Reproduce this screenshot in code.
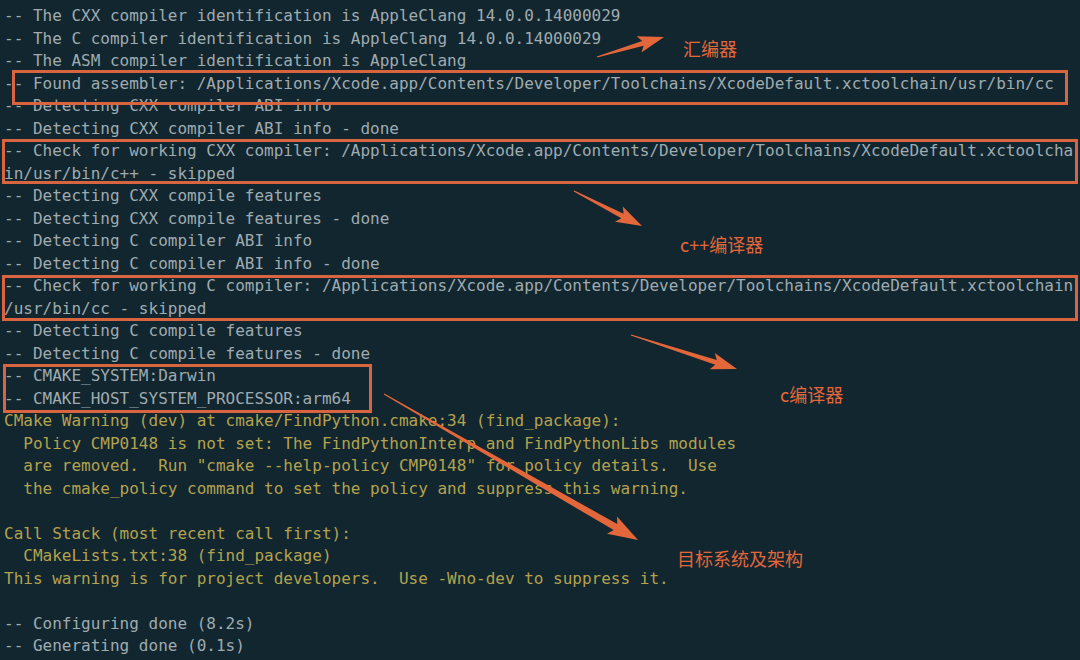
import React from "react";

type Line = { text: string; warn?: boolean };

const lines: Line[] = [
  { text: "-- The CXX compiler identification is AppleClang 14.0.0.14000029" },
  { text: "-- The C compiler identification is AppleClang 14.0.0.14000029" },
  { text: "-- The ASM compiler identification is AppleClang" },
  { text: "-- Found assembler: /Applications/Xcode.app/Contents/Developer/Toolchains/XcodeDefault.xctoolchain/usr/bin/cc" },
  { text: "-- Detecting CXX compiler ABI info" },
  { text: "-- Detecting CXX compiler ABI info - done" },
  { text: "-- Check for working CXX compiler: /Applications/Xcode.app/Contents/Developer/Toolchains/XcodeDefault.xctoolcha" },
  { text: "in/usr/bin/c++ - skipped" },
  { text: "-- Detecting CXX compile features" },
  { text: "-- Detecting CXX compile features - done" },
  { text: "-- Detecting C compiler ABI info" },
  { text: "-- Detecting C compiler ABI info - done" },
  { text: "-- Check for working C compiler: /Applications/Xcode.app/Contents/Developer/Toolchains/XcodeDefault.xctoolchain" },
  { text: "/usr/bin/cc - skipped" },
  { text: "-- Detecting C compile features" },
  { text: "-- Detecting C compile features - done" },
  { text: "-- CMAKE_SYSTEM:Darwin" },
  { text: "-- CMAKE_HOST_SYSTEM_PROCESSOR:arm64" },
  { text: "CMake Warning (dev) at cmake/FindPython.cmake:34 (find_package):", warn: true },
  { text: "  Policy CMP0148 is not set: The FindPythonInterp and FindPythonLibs modules", warn: true },
  { text: '  are removed.  Run "cmake --help-policy CMP0148" for policy details.  Use', warn: true },
  { text: "  the cmake_policy command to set the policy and suppress this warning.", warn: true },
  { text: "" },
  { text: "Call Stack (most recent call first):", warn: true },
  { text: "  CMakeLists.txt:38 (find_package)", warn: true },
  { text: "This warning is for project developers.  Use -Wno-dev to suppress it.", warn: true },
  { text: "" },
  { text: "-- Configuring done (8.2s)" },
  { text: "-- Generating done (0.1s)" },
];

// tapered annotation arrow, thin at the tail, fat head at the tip
function arrowPoints(x1: number, y1: number, x2: number, y2: number, shaft = 5, head = 17, headLen = 22) {
  const dx = x2 - x1;
  const dy = y2 - y1;
  const len = Math.hypot(dx, dy);
  const ux = dx / len;
  const uy = dy / len;
  const nx = -uy;
  const ny = ux;
  const bx = x2 - ux * headLen;
  const by = y2 - uy * headLen;
  const barbX = bx - ux * 4;
  const barbY = by - uy * 4;
  const pts = [
    [x1 + nx * 0.6, y1 + ny * 0.6],
    [bx + nx * (shaft / 2), by + ny * (shaft / 2)],
    [barbX + nx * (head / 2), barbY + ny * (head / 2)],
    [x2, y2],
    [barbX - nx * (head / 2), barbY - ny * (head / 2)],
    [bx - nx * (shaft / 2), by - ny * (shaft / 2)],
    [x1 - nx * 0.6, y1 - ny * 0.6],
  ];
  return pts.map((p) => `${p[0].toFixed(1)},${p[1].toFixed(1)}`).join(" ");
}

const Annotations: React.FC = () => (
  <svg className="absolute inset-0 pointer-events-none" width={1080} height={660} viewBox="0 0 1080 660">
    <g fill="none" stroke="#d8653f" strokeWidth={3}>
      <rect x={13.5} y={71.5} width={1053} height={32} />
      <rect x={3.5} y={140.5} width={1073} height={42} />
      <rect x={3.5} y={276.5} width={1073} height={43} />
      <rect x={4.5} y={365.5} width={366} height={46} />
    </g>
    <g fill="#e4673b">
      <polygon points={arrowPoints(597, 57, 664, 37)} />
      <polygon points={arrowPoints(574, 191, 642, 226)} />
      <polygon points={arrowPoints(631, 335, 737, 369)} />
      <polygon points={arrowPoints(384, 394, 638, 540, 7, 20, 26)} />
    </g>
  </svg>
);

export default function App() {
  return (
    <div className="relative w-[1080px] h-[660px] overflow-hidden bg-[#12262f]">
      <div className="pt-[5px] pl-[4px] font-['DejaVu_Sans_Mono',monospace] text-[16px] leading-[22.5px]">
        {lines.map((l, i) => (
          <div key={i} className={`whitespace-pre h-[22.5px] ${l.warn ? "text-[#b3a24f]" : "text-[#9fabaf]"}`}>
            {l.text}
          </div>
        ))}
      </div>
      <Annotations />
      <div className="absolute left-[683px] top-[35px] text-[18px] text-[#e4673b] font-['Noto_Sans_CJK_SC',sans-serif]">汇编器</div>
      <div className="absolute left-[680px] top-[231px] text-[18px] text-[#e4673b] font-['Noto_Sans_CJK_SC',sans-serif]">c++编译器</div>
      <div className="absolute left-[780px] top-[381px] text-[18px] text-[#e4673b] font-['Noto_Sans_CJK_SC',sans-serif]">c编译器</div>
      <div className="absolute left-[677px] top-[545px] text-[18px] text-[#e4673b] font-['Noto_Sans_CJK_SC',sans-serif]">目标系统及架构</div>
    </div>
  );
}
